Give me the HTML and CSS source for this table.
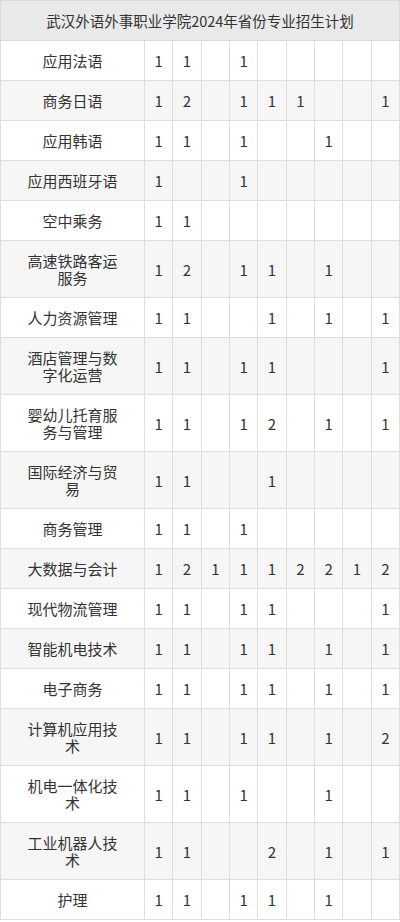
FILE: index.html
```
<!DOCTYPE html>
<html lang="zh">
<head>
<meta charset="utf-8">
<link rel="stylesheet" href="styles.css">
</head>
<body>
<table class="plan">
<colgroup><col class="c-name"><col><col><col><col><col><col><col><col><col></colgroup>
<thead><tr><th colspan="10">武汉外语外事职业学院2024年省份专业招生计划</th></tr></thead>
<tbody>
<tr><td class="name">应用法语</td><td>1</td><td>1</td><td></td><td>1</td><td></td><td></td><td></td><td></td><td></td></tr>
<tr><td class="name">商务日语</td><td>1</td><td>2</td><td></td><td>1</td><td>1</td><td>1</td><td></td><td></td><td>1</td></tr>
<tr><td class="name">应用韩语</td><td>1</td><td>1</td><td></td><td>1</td><td></td><td></td><td>1</td><td></td><td></td></tr>
<tr><td class="name">应用西班牙语</td><td>1</td><td></td><td></td><td>1</td><td></td><td></td><td></td><td></td><td></td></tr>
<tr><td class="name">空中乘务</td><td>1</td><td>1</td><td></td><td></td><td></td><td></td><td></td><td></td><td></td></tr>
<tr><td class="name">高速铁路客运服务</td><td>1</td><td>2</td><td></td><td>1</td><td>1</td><td></td><td>1</td><td></td><td></td></tr>
<tr><td class="name">人力资源管理</td><td>1</td><td>1</td><td></td><td></td><td>1</td><td></td><td>1</td><td></td><td>1</td></tr>
<tr><td class="name">酒店管理与数字化运营</td><td>1</td><td>1</td><td></td><td>1</td><td>1</td><td></td><td></td><td></td><td>1</td></tr>
<tr><td class="name">婴幼儿托育服务与管理</td><td>1</td><td>1</td><td></td><td>1</td><td>2</td><td></td><td>1</td><td></td><td>1</td></tr>
<tr><td class="name">国际经济与贸易</td><td>1</td><td>1</td><td></td><td></td><td>1</td><td></td><td></td><td></td><td></td></tr>
<tr><td class="name">商务管理</td><td>1</td><td>1</td><td></td><td>1</td><td></td><td></td><td></td><td></td><td></td></tr>
<tr><td class="name">大数据与会计</td><td>1</td><td>2</td><td>1</td><td>1</td><td>1</td><td>2</td><td>2</td><td>1</td><td>2</td></tr>
<tr><td class="name">现代物流管理</td><td>1</td><td>1</td><td></td><td>1</td><td>1</td><td></td><td></td><td></td><td>1</td></tr>
<tr><td class="name">智能机电技术</td><td>1</td><td>1</td><td></td><td>1</td><td>1</td><td></td><td>1</td><td></td><td>1</td></tr>
<tr><td class="name">电子商务</td><td>1</td><td>1</td><td></td><td>1</td><td>1</td><td></td><td>1</td><td></td><td>1</td></tr>
<tr><td class="name">计算机应用技术</td><td>1</td><td>1</td><td></td><td>1</td><td>1</td><td></td><td>1</td><td></td><td>2</td></tr>
<tr><td class="name">机电一体化技术</td><td>1</td><td>1</td><td></td><td>1</td><td></td><td></td><td>1</td><td></td><td></td></tr>
<tr><td class="name">工业机器人技术</td><td>1</td><td>1</td><td></td><td></td><td>2</td><td></td><td>1</td><td></td><td>1</td></tr>
<tr><td class="name">护理</td><td>1</td><td>1</td><td></td><td>1</td><td>1</td><td></td><td>1</td><td></td><td></td></tr>
</tbody>
</table>
</body>
</html>
```

FILE: styles.css
```
html, body {
  margin: 0;
  padding: 0;
  background: #fff;
}
body {
  font-family: "Noto Sans CJK SC", "Noto Sans", sans-serif;
  color: #333;
  font-size: 15px;
}
.plan {
  width: 400px;
  border-collapse: collapse;
  table-layout: fixed;
}
.c-name {
  width: 144px;
}
.plan th {
  background: #e9e9e9;
  font-weight: normal;
  font-size: 14.5px;
  line-height: 17px;
  padding: 11px 0;
  border: 1px solid #dadada;
  text-align: center;
}
.plan td {
  border: 1px solid #dedede;
  text-align: center;
  line-height: 17px;
  padding: 11px 0;
}
.plan td.name {
  padding: 11px 20px;
}
.plan tbody tr:nth-child(even) td {
  background: #f6f6f6;
}
```
